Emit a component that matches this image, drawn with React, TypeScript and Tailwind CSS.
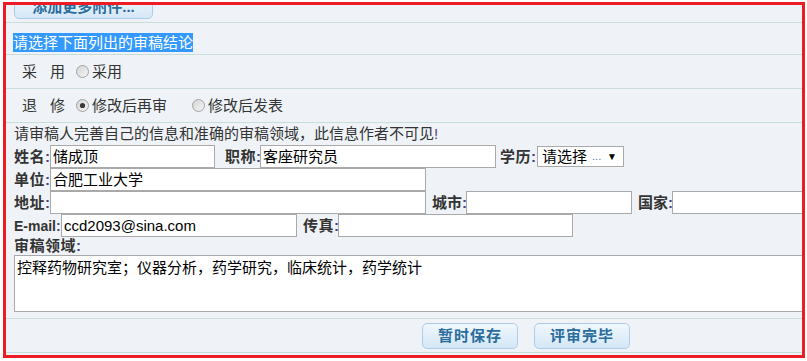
import React from "react";

const FONT = { fontFamily: '"Liberation Sans", "Noto Sans CJK SC", sans-serif' };

const Radio = ({ checked }: { checked?: boolean }) => (
  <svg width="13" height="13" viewBox="0 0 13 13" className="shrink-0">
    <defs>
      <linearGradient id={checked ? "rgc" : "rgu"} x1="0" y1="0" x2="1" y2="1">
        <stop offset="0" stopColor="#d4d4d4" />
        <stop offset="1" stopColor="#f6f6f6" />
      </linearGradient>
    </defs>
    <circle cx="6.5" cy="6.5" r="6" fill={`url(#${checked ? "rgc" : "rgu"})`} stroke="#a2a2a2" strokeWidth="1" />
    {checked && <circle cx="6.5" cy="6.5" r="2.6" fill="#3a3a3a" />}
  </svg>
);

const Label = ({ text, cls }: { text: string; cls: string }) => (
  <span className={cls}>
    {text}
    <span className="text-[#4a3f78] tracking-normal">:</span>
  </span>
);

const Field = ({ cls, value }: { cls: string; value?: string }) => (
  <div className={cls}>{value}</div>
);

export default function App() {
  return (
    <div className="w-[807px] h-[361px] bg-white pt-[2px] pl-[3px] overflow-hidden" style={FONT}>
      <div className="w-[802px] h-[356px] border-[3px] border-[#ed1c24] bg-[#eff3f7] overflow-hidden flex flex-col text-[#333]">
        {/* attachment button row */}
        <div className="h-[18px] shrink-0 border-b border-[#c6ddd9] overflow-hidden pl-[8px]">
          <div className="mt-[-10px] w-[139px] h-[24px] rounded-[5px] border border-[#abcde8] bg-linear-to-b from-[#f3f9fd] to-[#d4e7f6] flex items-center justify-center text-[15px] font-bold text-[#2a6c9c] leading-[20px]">
            添加更多附件...
          </div>
        </div>

        {/* header */}
        <div className="h-[32px] shrink-0 border-b border-[#c6ddd9] pl-[7px] pt-[8px]">
          <span className="inline-block bg-[#3399ff] text-white text-[15px] leading-[19px] h-[19px]">
            请选择下面列出的审稿结论
          </span>
        </div>

        {/* 采用 */}
        <div className="h-[34px] shrink-0 border-b border-[#c6ddd9] flex items-center pl-[16px] text-[15px] leading-[20px]">
          <span>采</span>
          <span className="ml-[13px]">用</span>
          <span className="ml-[11px] flex items-center">
            <Radio />
          </span>
          <span className="ml-[3px]">采用</span>
        </div>

        {/* 退修 */}
        <div className="h-[34px] shrink-0 border-b border-[#c6ddd9] flex items-center pl-[16px] text-[15px] leading-[20px]">
          <span>退</span>
          <span className="ml-[13px]">修</span>
          <span className="ml-[11px] flex items-center">
            <Radio checked />
          </span>
          <span className="ml-[3px]">修改后再审</span>
          <span className="ml-[25px] flex items-center">
            <Radio />
          </span>
          <span className="ml-[3px]">修改后发表</span>
        </div>

        {/* info text */}
        <div className="h-[22px] shrink-0 flex items-center pl-[8px] text-[15px] leading-[20px] whitespace-nowrap">
          请审稿人完善自己的信息和准确的审稿领域，此信息作者不可见<span className="text-[#5a3f7a]">!</span>
        </div>

        {/* row 1 */}
        <div className="h-[23px] shrink-0 flex items-center pl-[8px] whitespace-nowrap">
          <Label text="姓名" cls="w-[36px] shrink-0 text-[15px] font-bold leading-[20px] tracking-[0.5px]" />
          <Field cls="w-[165px] h-[23px] shrink-0 border border-[#a9a9a9] bg-white pl-[2px] text-[15px] leading-[21px] text-black overflow-hidden" value="储成顶" />
          <Label text="职称" cls="ml-[10px] w-[35px] shrink-0 text-[15px] font-bold leading-[20px] tracking-[0.5px]" />
          <Field cls="w-[236px] h-[23px] shrink-0 border border-[#a9a9a9] bg-white pl-[2px] text-[15px] leading-[21px] text-black overflow-hidden" value="客座研究员" />
          <Label text="学历" cls="ml-[4px] w-[37px] shrink-0 text-[15px] font-bold leading-[20px] tracking-[0.5px]" />
          <div className="w-[87px] h-[21px] shrink-0 border border-[#a9a9a9] bg-white flex items-center pl-[4px] pr-[6px] text-[15px] leading-[19px] text-black">
            <span>请选择</span>
            <span className="ml-[5px] text-[11px] text-[#5577aa]">...</span>
            <span className="ml-auto text-[10px] leading-[10px]">▼</span>
          </div>
        </div>

        {/* row 2 */}
        <div className="h-[23px] shrink-0 flex items-center pl-[8px] whitespace-nowrap">
          <Label text="单位" cls="w-[36px] shrink-0 text-[15px] font-bold leading-[20px] tracking-[0.5px]" />
          <Field cls="w-[376px] h-[23px] shrink-0 border border-[#a9a9a9] bg-white pl-[2px] text-[15px] leading-[21px] text-black overflow-hidden" value="合肥工业大学" />
        </div>

        {/* row 3 */}
        <div className="h-[23px] shrink-0 flex items-center pl-[8px] whitespace-nowrap">
          <Label text="地址" cls="w-[36px] shrink-0 text-[15px] font-bold leading-[20px] tracking-[0.5px]" />
          <Field cls="w-[376px] h-[23px] shrink-0 border border-[#a9a9a9] bg-white" />
          <Label text="城市" cls="ml-[6px] w-[34px] shrink-0 text-[15px] font-bold leading-[20px]" />
          <Field cls="w-[166px] h-[23px] shrink-0 border border-[#a9a9a9] bg-white" />
          <Label text="国家" cls="ml-[6px] w-[34px] shrink-0 text-[15px] font-bold leading-[20px]" />
          <Field cls="w-[180px] h-[23px] shrink-0 border border-[#a9a9a9] bg-white" />
        </div>

        {/* row 4 */}
        <div className="h-[23px] shrink-0 flex items-center pl-[8px] whitespace-nowrap">
          <Label text="E-mail" cls="w-[47px] shrink-0 text-[14px] font-bold leading-[20px]" />
          <Field cls="w-[236px] h-[23px] shrink-0 border border-[#a9a9a9] bg-white pl-[2px] text-[15px] leading-[21px] text-black overflow-hidden" value="ccd2093@sina.com" />
          <Label text="传真" cls="ml-[6px] w-[35px] shrink-0 text-[15px] font-bold leading-[20px] tracking-[0.5px]" />
          <Field cls="w-[235px] h-[23px] shrink-0 border border-[#a9a9a9] bg-white" />
        </div>

        {/* 审稿领域 */}
        <div className="h-[18px] shrink-0 flex items-center pl-[8px]">
          <Label text="审稿领域" cls="text-[15px] font-bold leading-[18px] tracking-[0.5px]" />
        </div>
        <div className="h-[57px] shrink-0 ml-[8px] w-[790px] border border-[#a9a9a9] bg-white pl-[2px] pt-[2px] text-[15px] leading-[20px] text-black whitespace-nowrap overflow-hidden">
          控释药物研究室；仪器分析，药学研究，临床统计，药学统计
        </div>
        <div className="h-[7px] shrink-0 border-b border-[#c6ddd9]" />

        {/* buttons */}
        <div className="h-[34px] shrink-0 border-b border-[#c6ddd9] pt-[4px] pl-[416px] flex gap-[16px]">
          <div className="w-[96px] h-[26px] rounded-[5px] border border-[#abcde8] bg-linear-to-b from-[#f0f7fd] to-[#d4e7f6] flex items-center justify-center text-[15px] font-bold text-[#2a6c9c] leading-[20px] tracking-[1px]">
            暂时保存
          </div>
          <div className="w-[96px] h-[26px] rounded-[5px] border border-[#abcde8] bg-linear-to-b from-[#f0f7fd] to-[#d4e7f6] flex items-center justify-center text-[15px] font-bold text-[#2a6c9c] leading-[20px] tracking-[1px]">
            评审完毕
          </div>
        </div>
      </div>
    </div>
  );
}
